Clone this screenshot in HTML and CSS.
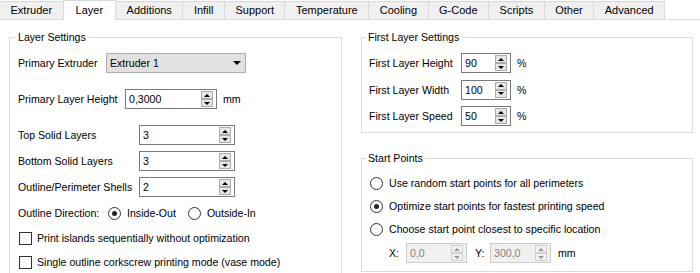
FILE: index.html
```html
<!DOCTYPE html>
<html lang="en">
<head>
  <meta charset="UTF-8" />
  <title>Layer</title>
  <link rel="stylesheet" href="styles.css">
</head>
<body>
  <div class="tabs">
    <div class="tab">Extruder</div>
    <div class="tab active">Layer</div>
    <div class="tab">Additions</div>
    <div class="tab">Infill</div>
    <div class="tab">Support</div>
    <div class="tab">Temperature</div>
    <div class="tab">Cooling</div>
    <div class="tab">G-Code</div>
    <div class="tab">Scripts</div>
    <div class="tab">Other</div>
    <div class="tab">Advanced</div>
  </div>

  <div class="page">
    <fieldset class="group layer-group">
      <legend>Layer Settings</legend>

      <div class="row">
        <span class="lbl lbl-extruder">Primary Extruder</span>
        <div class="combo"><span>Extruder 1</span><span class="caret"></span></div>
      </div>

      <div class="row loose">
        <span class="lbl lbl-height">Primary Layer Height</span>
        <div class="spin w-height">
          <span class="val">0,3000</span>
          <span class="arrows"><span class="arr up"></span><span class="arr down"></span></span>
        </div>
        <span class="unit">mm</span>
      </div>

      <div class="row loose">
        <span class="lbl lbl-solid">Top Solid Layers</span>
        <div class="spin w-solid">
          <span class="val">3</span>
          <span class="arrows"><span class="arr up"></span><span class="arr down"></span></span>
        </div>
      </div>

      <div class="row">
        <span class="lbl lbl-solid">Bottom Solid Layers</span>
        <div class="spin w-solid">
          <span class="val">3</span>
          <span class="arrows"><span class="arr up"></span><span class="arr down"></span></span>
        </div>
      </div>

      <div class="row">
        <span class="lbl lbl-solid">Outline/Perimeter Shells</span>
        <div class="spin w-solid">
          <span class="val">2</span>
          <span class="arrows"><span class="arr up"></span><span class="arr down"></span></span>
        </div>
      </div>

      <div class="row">
        <span class="lbl lbl-direction">Outline Direction:</span>
        <span class="opt"><span class="radio checked"></span>Inside-Out</span>
        <span class="opt"><span class="radio"></span>Outside-In</span>
      </div>

      <div class="row check-row">
        <span class="check"></span>Print islands sequentially without optimization
      </div>

      <div class="row check-row">
        <span class="check"></span>Single outline corkscrew printing mode (vase mode)
      </div>
    </fieldset>

    <div class="side">
      <fieldset class="group first-group">
        <legend>First Layer Settings</legend>

        <div class="row">
          <span class="lbl lbl-first">First Layer Height</span>
          <div class="spin w-first">
            <span class="val">90</span>
            <span class="arrows"><span class="arr up"></span><span class="arr down"></span></span>
          </div>
          <span class="unit">%</span>
        </div>

        <div class="row">
          <span class="lbl lbl-first">First Layer Width</span>
          <div class="spin w-first">
            <span class="val">100</span>
            <span class="arrows"><span class="arr up"></span><span class="arr down"></span></span>
          </div>
          <span class="unit">%</span>
        </div>

        <div class="row">
          <span class="lbl lbl-first">First Layer Speed</span>
          <div class="spin w-first">
            <span class="val">50</span>
            <span class="arrows"><span class="arr up"></span><span class="arr down"></span></span>
          </div>
          <span class="unit">%</span>
        </div>
      </fieldset>

      <fieldset class="group start-group">
        <legend>Start Points</legend>

        <div class="row radio-row">
          <span class="opt"><span class="radio"></span>Use random start points for all perimeters</span>
        </div>
        <div class="row radio-row">
          <span class="opt"><span class="radio checked"></span>Optimize start points for fastest printing speed</span>
        </div>
        <div class="row radio-row">
          <span class="opt"><span class="radio"></span>Choose start point closest to specific location</span>
        </div>

        <div class="row xy-row">
          <span class="xy-lbl">X:</span>
          <div class="spin w-xy disabled">
            <span class="val">0,0</span>
            <span class="arrows"><span class="arr up"></span><span class="arr down"></span></span>
          </div>
          <span class="xy-lbl y-lbl">Y:</span>
          <div class="spin w-xy disabled">
            <span class="val">300,0</span>
            <span class="arrows"><span class="arr up"></span><span class="arr down"></span></span>
          </div>
          <span class="unit xy-unit">mm</span>
        </div>
      </fieldset>
    </div>
  </div>
</body>
</html>
```

FILE: styles.css
```css
body {
  margin: 0;
  background: #fff;
  color: #000;
  font-family: "Liberation Sans", Arial, sans-serif;
  font-size: 11px;
  overflow: hidden;
}

/* tab strip */
.tabs {
  display: flex; align-items: flex-end;
  height: 20px; box-sizing: border-box;
  border-bottom: 1px solid #d9d9d9;
}
.tab {
  height: 18px; box-sizing: border-box;
  line-height: 17px;
  padding: 0 10.5px;
  background: #f0f0f0;
  border-top: 1px solid #d9d9d9;
  border-right: 1px solid #d9d9d9;
  white-space: nowrap;
}
.tab.active {
  height: 20px; margin-bottom: -1px;
  line-height: 19px;
  margin-left: -1px;
  padding: 0 12px;
  background: #fff;
  border-left: 1px solid #d9d9d9;
}

.page {
  display: flex; align-items: flex-start;
  gap: 19px;
  padding: 11px 0 0 9px;
  font-size: 10.6px;
}

/* group boxes */
.group {
  margin: 0; min-width: 0;
  border: 1px solid #dcdcdc;
  padding: 9px 8px 0;
  box-sizing: border-box;
}
.group legend {
  padding: 0 2px; margin-left: -2px;
  line-height: 13px;
}
.layer-group { width: 333px; padding-bottom: 12px; }
.side { width: 332px; display: flex; flex-direction: column; }
.side .group { padding-left: 7px; }
.side .group legend { margin-left: -3px; }
.first-group { padding-bottom: 6px; }
.start-group { margin-top: 19px; padding-bottom: 8px; }

/* rows */
.row {
  display: flex; align-items: center;
  height: 20px;
  white-space: nowrap;
}
.row + .row { margin-top: 6px; }
.row.loose { margin-top: 16px; }
.first-group .row + .row { margin-top: 6.5px; }

.lbl { flex: none; }
.lbl-extruder { width: 88px; }
.lbl-height { width: 107px; }
.lbl-solid { width: 121px; }
.lbl-direction { width: 90px; }
.lbl-first { width: 92px; }

.unit { margin-left: 6px; }

/* combo box */
.combo {
  width: 140px; height: 20px; box-sizing: border-box;
  display: flex; align-items: center; justify-content: space-between;
  padding: 0 4px 0 3px;
  background: #e1e1e1;
  border: 1px solid #adadad;
}
.caret {
  width: 0; height: 0;
  border-top: 4px solid #000;
  border-left: 4px solid transparent;
  border-right: 4px solid transparent;
}

/* spin boxes */
.spin {
  flex: none;
  height: 20px; box-sizing: border-box;
  display: flex; align-items: center;
  background: #fff;
  border: 1px solid #7a7a7a;
}
.spin .val { flex: 1; padding-left: 3px; }
.arrows {
  width: 12px; margin-right: 3px;
  display: flex; flex-direction: column;
}
.arr {
  height: 8px; box-sizing: border-box;
  display: flex; align-items: center; justify-content: center;
  background: #e6e6e6;
  border: 1px solid #adadad;
}
.arr::after {
  content: "";
  border-left: 3px solid transparent;
  border-right: 3px solid transparent;
}
.arr.up::after { border-bottom: 3px solid #000; }
.arr.down::after { border-top: 3px solid #000; }

.w-height { width: 92px; }
.w-solid { width: 96px; }
.w-first { width: 50px; }
.w-xy { width: 61px; }

.spin.disabled { background: #f0f0f0; border-color: #cccccc; color: #838383; }
.spin.disabled .arr { background: #f0f0f0; border-color: #d0d0d0; }
.spin.disabled .arr.up::after { border-bottom-color: #9a9a9a; }
.spin.disabled .arr.down::after { border-top-color: #9a9a9a; }

/* radios and checks */
.opt { display: flex; align-items: center; gap: 6px; }
.opt + .opt { margin-left: 12px; }
.radio {
  width: 13px; height: 13px; box-sizing: border-box;
  border: 1px solid #333;
  border-radius: 50%;
  background: #fff;
  display: flex; align-items: center; justify-content: center;
}
.radio.checked::after {
  content: "";
  width: 5px; height: 5px;
  border-radius: 50%;
  background: #222;
}
.check-row { height: 18px; padding-left: 1px; }
.check {
  width: 13px; height: 13px; box-sizing: border-box;
  border: 1px solid #333;
  background: #fff;
  margin-right: 5px;
}

.radio-row { height: 18px; padding-left: 1px; }
.start-group .row + .row { margin-top: 5px; }
.start-group .xy-row { margin-top: 2px; padding-left: 20px; }
.xy-lbl { width: 17px; }
.y-lbl { width: 15px; margin-left: 8px; }
.xy-unit { margin-left: 7px; }
```
